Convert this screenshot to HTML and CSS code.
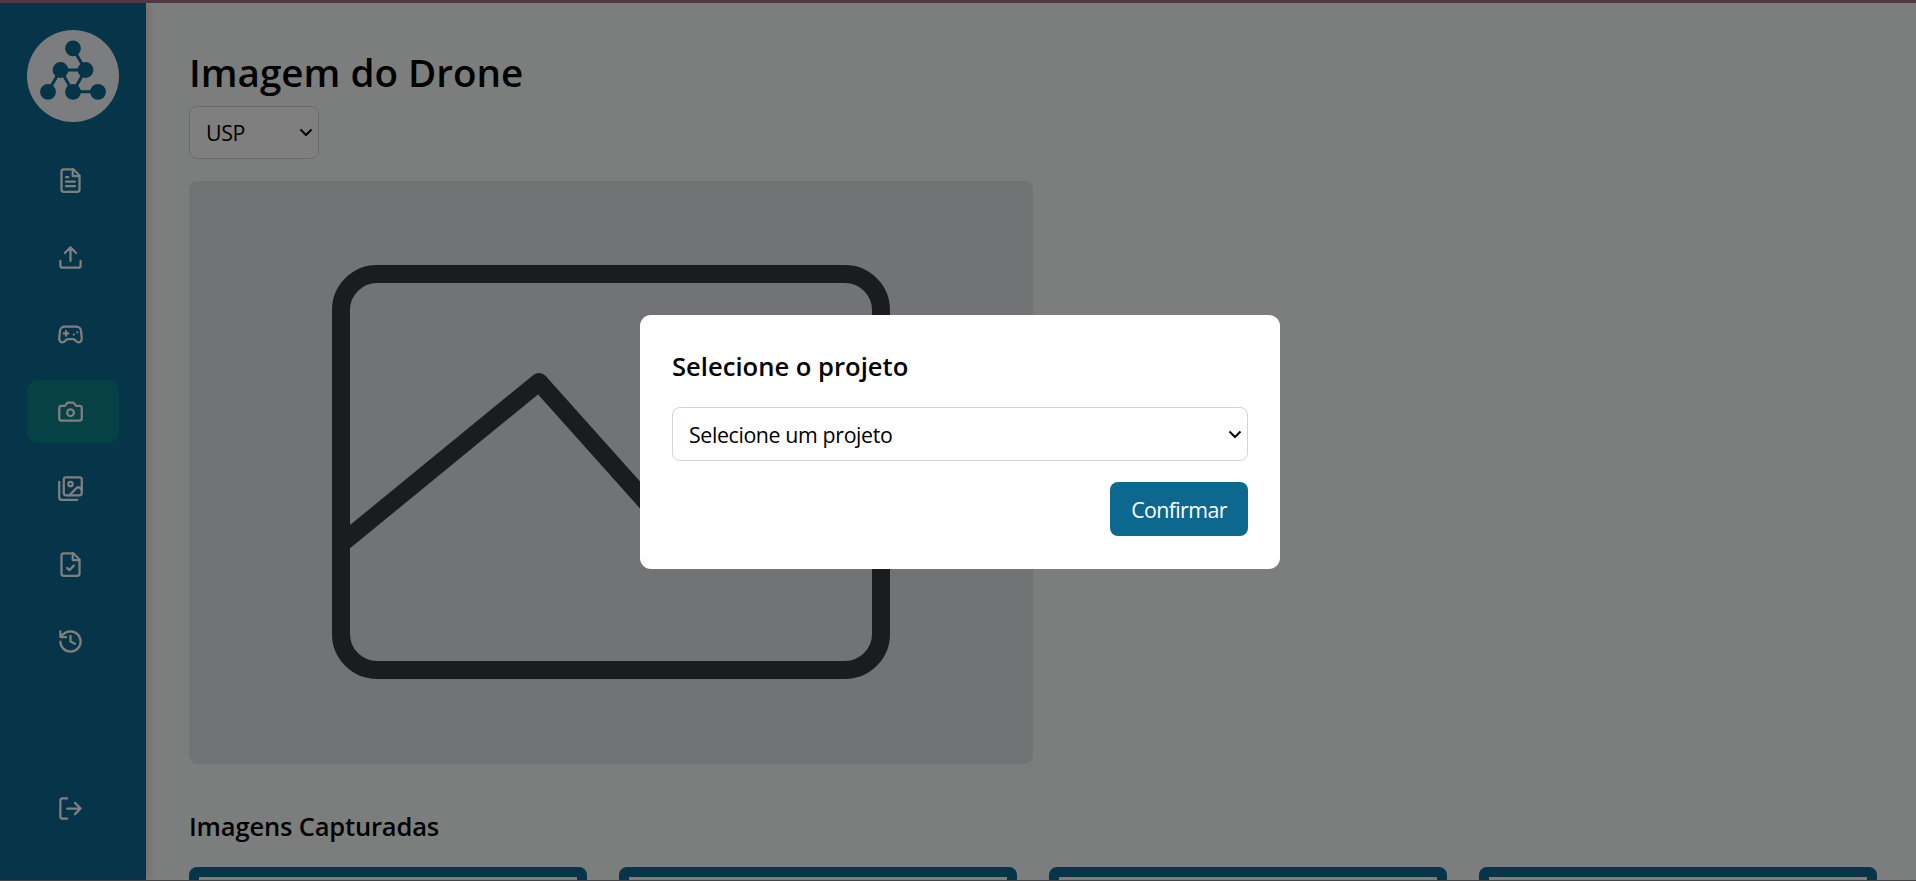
FILE: index.html
```html
<!DOCTYPE html>
<html lang="pt-BR">
<head>
<meta charset="utf-8">
<title>Imagem do Drone</title>
<link rel="stylesheet" href="styles.css">
</head>
<body>
<div class="app">
  <aside class="sidebar">
    <div class="logo">
      <svg viewBox="0 0 92 92" width="92" height="92" fill="#0d6890" stroke="#0d6890" stroke-width="3">
        <path fill="none" d="M46 18.5 58.5 40H33.5L21 61.800M33.500 40 46 61.800 58.500 40M46 61.800H71"/>
        <g stroke="none"><circle cx="46" cy="18.300" r="7.900"/><circle cx="33.500" cy="40" r="7.900"/><circle cx="58.500" cy="40" r="7.900"/><circle cx="21" cy="61.800" r="7.900"/><circle cx="46" cy="61.800" r="7.900"/><circle cx="71" cy="61.800" r="7.900"/></g>
      </svg>
    </div>
    <nav class="nav">
      <a class="item"><svg class="icon" viewBox="0 0 24 24"><path d="M14.500 2H6a2 2 0 0 0-2 2v16a2 2 0 0 0 2 2h12a2 2 0 0 0 2-2V7.500L14.500 2z"/><path d="M14 2v6h6M10 9H8M16 13H8M16 17H8"/></svg></a>
      <a class="item"><svg class="icon" viewBox="0 0 24 24"><path d="M21 15v4a2 2 0 0 1-2 2H5a2 2 0 0 1-2-2v-4M17 8l-5-5-5 5M12 3v12"/></svg></a>
      <a class="item"><svg class="icon" viewBox="0 0 24 24"><path d="M6 11h4M8 9v4M15 12h.01M18 10h.01"/><path d="M17.320 5H6.680a4 4 0 0 0-3.978 3.590C2.604 9.416 2 14.456 2 16a3 3 0 0 0 3 3c1 0 1.500-.5 2-1l1.414-1.414A2 2 0 0 1 9.828 16h4.344a2 2 0 0 1 1.414.586L17 18c.5.5 1 1 2 1a3 3 0 0 0 3-3c0-1.545-.604-6.584-.685-7.258A4 4 0 0 0 17.320 5z"/></svg></a>
      <a class="item active"><svg class="icon" viewBox="0 0 24 24"><path d="M14.500 4h-5L7 7H4a2 2 0 0 0-2 2v9a2 2 0 0 0 2 2h16a2 2 0 0 0 2-2V9a2 2 0 0 0-2-2h-3l-2.500-3z"/><circle cx="12" cy="13" r="3"/></svg></a>
      <a class="item"><svg class="icon" viewBox="0 0 24 24"><path d="M18 22H4a2 2 0 0 1-2-2V6M22 13l-1.296-1.296a2.410 2.410 0 0 0-3.408 0L11 18"/><circle cx="12" cy="8" r="2"/><rect x="6" y="2" width="16" height="16" rx="2"/></svg></a>
      <a class="item"><svg class="icon" viewBox="0 0 24 24"><path d="M14.500 2H6a2 2 0 0 0-2 2v16a2 2 0 0 0 2 2h12a2 2 0 0 0 2-2V7.500L14.500 2z"/><path d="M14 2v6h6M9 15l2 2 4-4"/></svg></a>
      <a class="item"><svg class="icon" viewBox="0 0 24 24"><path d="M3 12a9 9 0 1 0 9-9 9.750 9.750 0 0 0-6.740 2.740L3 8M3 3v5h5M12 7v5l4 2"/></svg></a>
    </nav>
    <a class="item logout"><svg class="icon" viewBox="0 0 24 24"><path d="M9 21H5a2 2 0 0 1-2-2V5a2 2 0 0 1 2-2h4M16 17l5-5-5-5M21 12H9"/></svg></a>
  </aside>
  <main class="main">
    <h1 class="title">Imagem do Drone</h1>
    <div class="select select-small"><span>USP</span><svg class="chevron" viewBox="0 0 14 9"><path d="M1.500 1.500 7 7l5.500-5.500"/></svg></div>
    <section class="viewer">
      <svg class="placeholder" viewBox="0 0 558 414"><rect x="9" y="9" width="540" height="396" rx="36"/><path d="M9 279 207 117 355 282.500"/></svg>
    </section>
    <h2 class="subtitle">Imagens Capturadas</h2>
    <div class="gallery"><div class="shot"></div><div class="shot"></div><div class="shot"></div><div class="shot"></div></div>
  </main>
</div>
<div class="overlay">
  <div class="modal" role="dialog">
    <h2 class="modal-title">Selecione o projeto</h2>
    <div class="select select-wide"><span>Selecione um projeto</span><svg class="chevron" viewBox="0 0 14 9"><path d="M1.500 1.500 7 7l5.500-5.500"/></svg></div>
    <button class="confirm">Confirmar</button>
  </div>
</div>
</body>
</html>
```
FILE: styles.css
```css
* { box-sizing: border-box; margin: 0; }
body {
  height: 881px;
  overflow: hidden;
  border-top: 3px solid #a86f80;
  border-bottom: 1px solid #888;
  background: #f9fdfa;
  color: #000;
  font-family: "Open Sans", "Noto Sans", sans-serif;
  font-size: 21.33px;
}
.app { display: flex; height: 877px; }
.sidebar {
  flex: none;
  display: flex;
  flex-direction: column;
  align-items: center;
  width: 146px;
  height: 877px;
  padding: 27px 27px 40px;
  background: #0d6890;
  box-shadow: 2px 0 10px rgba(80, 0, 20, 0.16);
}
.logo { width: 92px; height: 92px; border-radius: 50%; background: #f9fbfc; }
.logo svg { display: block; }
.nav { display: flex; flex-direction: column; gap: 13.9px; margin-top: 27px; }
.item {
  display: flex;
  align-items: center;
  width: 92px;
  height: 63px;
  padding-left: 30px;
  border-radius: 11px;
}
.active { background: #0d828a; }
.logout { margin-top: auto; }
.icon {
  width: 27px;
  height: 27px;
  fill: none;
  stroke: #fff;
  stroke-width: 2;
  stroke-linecap: round;
  stroke-linejoin: round;
}
.main { flex: 1; overflow: hidden; padding: 41px 39px 0 43px; }
.title { height: 62px; font-size: 38.6px; font-weight: 600; line-height: 56px; white-space: nowrap; }
.select {
  display: flex;
  align-items: center;
  justify-content: space-between;
  border: 1px solid #d1d5db;
  border-radius: 8px;
  background: #fff;
  letter-spacing: -0.37px;
}
.select-small { width: 130px; height: 53px; padding: 0 5px 0 16px; }
.chevron { width: 14px; height: 9px; fill: none; stroke: #000; stroke-width: 2; }
.viewer {
  display: flex;
  justify-content: center;
  align-items: flex-start;
  width: 844px;
  height: 583px;
  margin-top: 22px;
  padding-top: 84px;
  border-radius: 8px;
  background: #e5e7eb;
}
.placeholder { width: 558px; height: 414px; fill: none; stroke: #363840; stroke-width: 18; stroke-linejoin: round; }
.subtitle { margin-top: 43px; font-size: 25.5px; font-weight: 600; line-height: 38px; letter-spacing: -0.16px; }
.gallery { display: grid; grid-template-columns: repeat(4, 398px); gap: 32px; margin-top: 22px; }
.shot { height: 260px; border: 10px solid #0d6890; border-radius: 8px; }
.overlay {
  position: fixed;
  inset: 0;
  display: flex;
  justify-content: center;
  align-items: center;
  padding: 2px 0 0 4px;
  background: rgba(0, 0, 0, 0.5);
}
.modal {
  display: flex;
  flex-direction: column;
  width: 640px;
  height: 254px;
  padding: 32px;
  border-radius: 11px;
  background: #fff;
}
.modal-title { height: 60px; font-size: 25.6px; font-weight: 600; line-height: 40px; }
.select-wide { height: 54px; padding: 1px 5px 0 16px; }
.confirm {
  align-self: flex-end;
  width: 138px;
  height: 54px;
  margin-top: 21px;
  padding-top: 3px;
  border: 0;
  border-radius: 8px;
  background: #0d6890;
  color: #fff;
  font: inherit;
  letter-spacing: -0.6px;
}
```
